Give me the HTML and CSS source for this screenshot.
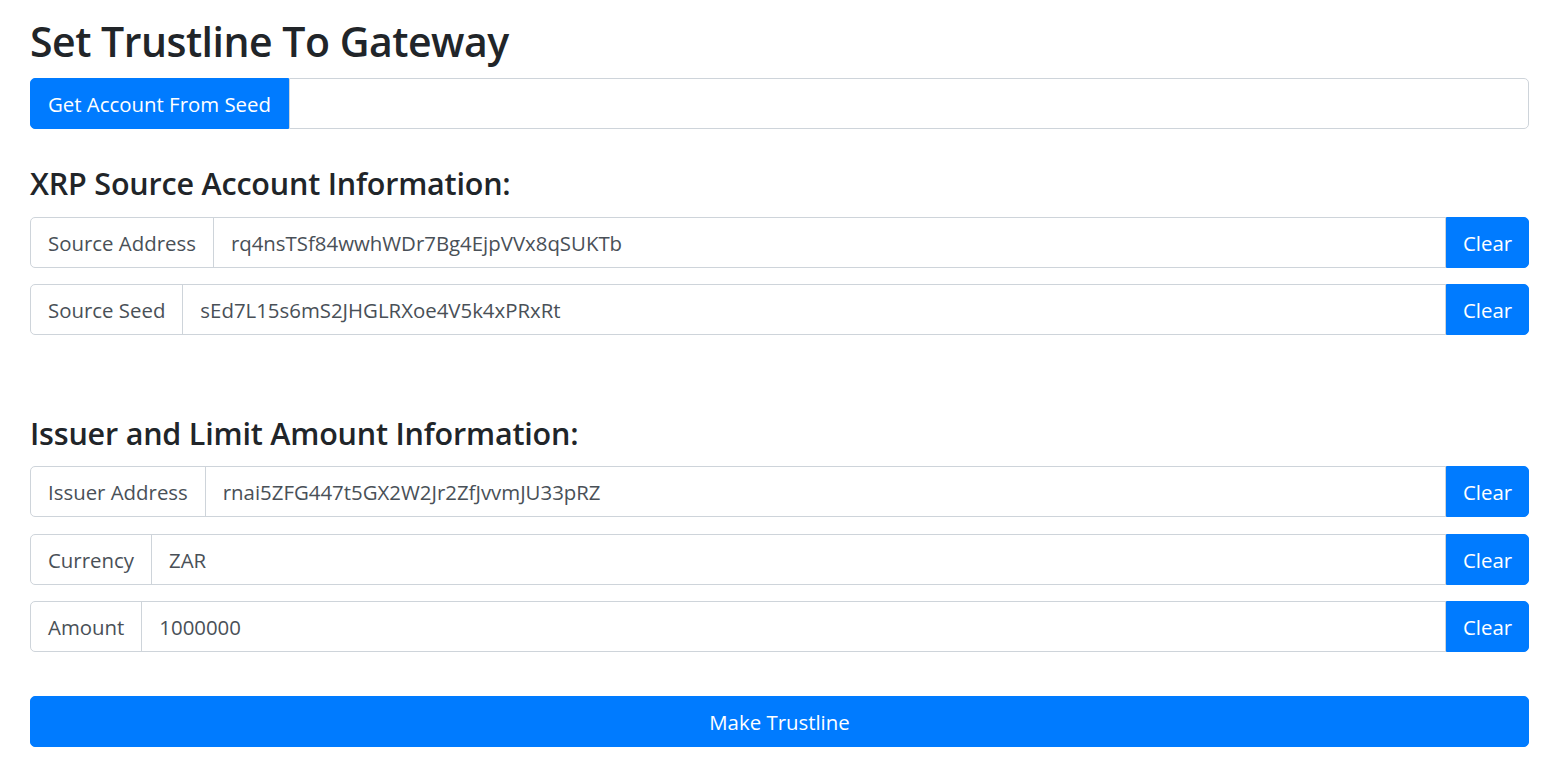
FILE: index.html
```html
<!DOCTYPE html>
<html>
<head>
<meta charset="utf-8">
<title>Set Trustline To Gateway</title>
<link rel="stylesheet" href="styles.css">
</head>
<body>
<div class="page">
  <h1 class="title">Set Trustline To Gateway</h1>
  <div class="group">
    <button class="btn first">Get Account From Seed</button>
    <input class="field last" type="text" value="">
  </div>

  <h2 class="section section-1">XRP Source Account Information:</h2>
  <div class="group row">
    <span class="label">Source Address</span>
    <input class="field" type="text" value="rq4nsTSf84wwhWDr7Bg4EjpVVx8qSUKTb">
    <button class="btn last">Clear</button>
  </div>
  <div class="group row">
    <span class="label">Source Seed</span>
    <input class="field" type="text" value="sEd7L15s6mS2JHGLRXoe4V5k4xPRxRt">
    <button class="btn last">Clear</button>
  </div>

  <h2 class="section section-2">Issuer and Limit Amount Information:</h2>
  <div class="group row">
    <span class="label">Issuer Address</span>
    <input class="field" type="text" value="rnai5ZFG447t5GX2W2Jr2ZfJvvmJU33pRZ">
    <button class="btn last">Clear</button>
  </div>
  <div class="group row">
    <span class="label">Currency</span>
    <input class="field" type="text" value="ZAR">
    <button class="btn last">Clear</button>
  </div>
  <div class="group row">
    <span class="label">Amount</span>
    <input class="field" type="text" value="1000000">
    <button class="btn last">Clear</button>
  </div>

  <button class="btn wide">Make Trustline</button>
</div>
</body>
</html>
```

FILE: styles.css
```css
* { box-sizing: border-box; }
html, body { margin: 0; padding: 0; background: #fff; }
body {
  font-family: "Open Sans", "Noto Sans", "Liberation Sans", sans-serif;
  font-size: 20.4px;
  color: #212529;
}
.page {
  padding: 0 26px 0 30px;
}
.title {
  margin: 15px 0 11px 0;
  font-size: 41px;
  font-weight: 600;
  line-height: 52px;
  letter-spacing: -0.5px;
}
.group {
  display: flex;
  height: 51px;
}
.row { margin-bottom: 16px; }
.row-tall { margin-bottom: 17px; }
.btn {
  font-family: inherit;
  font-size: 20.4px;
  color: #fff;
  background: #007bff;
  border: 1px solid #007bff;
  border-radius: 5px;
  padding: 0 17px;
  height: 51px;
  cursor: pointer;
}
.btn.first { border-radius: 5px 0 0 5px; }
.btn.last { border-radius: 0 5px 5px 0; width: 83px; padding: 0; }
.label {
  display: flex;
  align-items: center;
  padding: 0 17px;
  border: 1px solid #ced4da;
  border-radius: 5px 0 0 5px;
  color: #495057;
  background: #fff;
  white-space: nowrap;
}
.field {
  flex: 1;
  min-width: 0;
  height: 51px;
  font-family: inherit;
  font-size: 20.4px;
  color: #495057;
  border: 1px solid #ced4da;
  margin-left: -1px;
  padding: 0 17px;
  background: #fff;
  outline: none;
}
.field.last { border-radius: 0 5px 5px 0; margin-left: 0; }
.section {
  font-size: 30.5px;
  font-weight: 600;
  line-height: 38px;
  margin: 0;
  letter-spacing: -0.2px;
}
.section-1 { margin-top: 35px; margin-bottom: 15px; }
.section-2 { margin-top: 79px; margin-bottom: 14px; }
.section-2 + .row { margin-bottom: 17px; }
.wide {
  display: block;
  width: 100%;
  margin-top: 44px;
}
```
